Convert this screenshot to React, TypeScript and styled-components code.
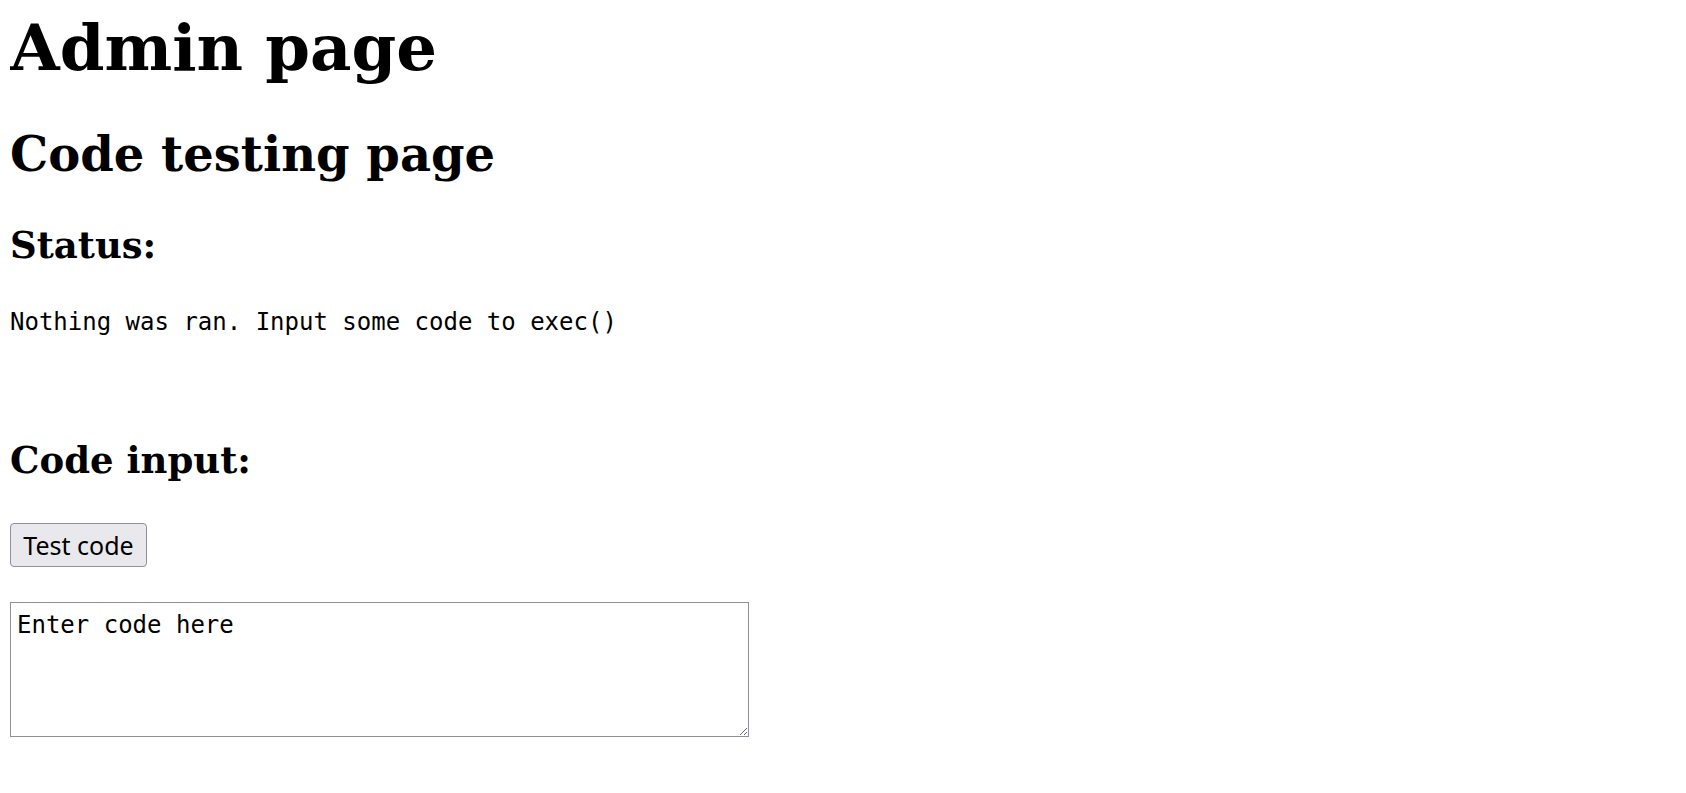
import styled, { createGlobalStyle } from "styled-components";

const GlobalStyle = createGlobalStyle`
  body {
    margin: 0 10px;
    background: #fff;
    color: #000;
    font-family: "DejaVu Serif", serif;
  }
`;

const Page = styled.div`
  padding-top: 10px;
`;

const Title = styled.h1`
  margin: 0;
  font-size: 64px;
  font-weight: bold;
`;

const Subtitle = styled.h2`
  margin: 41px 0 0;
  font-size: 48px;
  font-weight: bold;
`;

const Heading = styled.h3<{ $gap: number }>`
  margin: ${(p) => p.$gap}px 0 0;
  font-size: 37px;
  font-weight: bold;
`;

const Status = styled.pre`
  margin: 41px 0 0;
  font-family: "DejaVu Sans Mono", monospace;
  font-size: 24px;
`;

const TestButton = styled.button`
  display: block;
  margin-top: 41px;
  width: 137px;
  height: 44px;
  padding: 0 10px;
  font-family: "Noto Sans", sans-serif;
  font-size: 25px;
  color: #000;
  background: #e9e9ed;
  border: 1px solid #8f8f9d;
  border-radius: 4px;
`;

const CodeBox = styled.textarea`
  display: block;
  box-sizing: border-box;
  margin-top: 35px;
  width: 739px;
  height: 135px;
  padding: 8px 6px;
  font-family: "DejaVu Sans Mono", monospace;
  font-size: 24px;
  color: #000;
  border: 1px solid #8f8f9d;
  border-radius: 0;
  outline: none;
`;

export default function App() {
  return (
    <>
      <GlobalStyle />
      <Page>
        <Title>Admin page</Title>
        <Subtitle>Code testing page</Subtitle>
        <Heading $gap={41}>Status:</Heading>
        <Status>Nothing was ran. Input some code to exec()</Status>
        <Heading $gap={102}>Code input:</Heading>
        <TestButton>Test code</TestButton>
        <CodeBox defaultValue="Enter code here" />
      </Page>
    </>
  );
}
